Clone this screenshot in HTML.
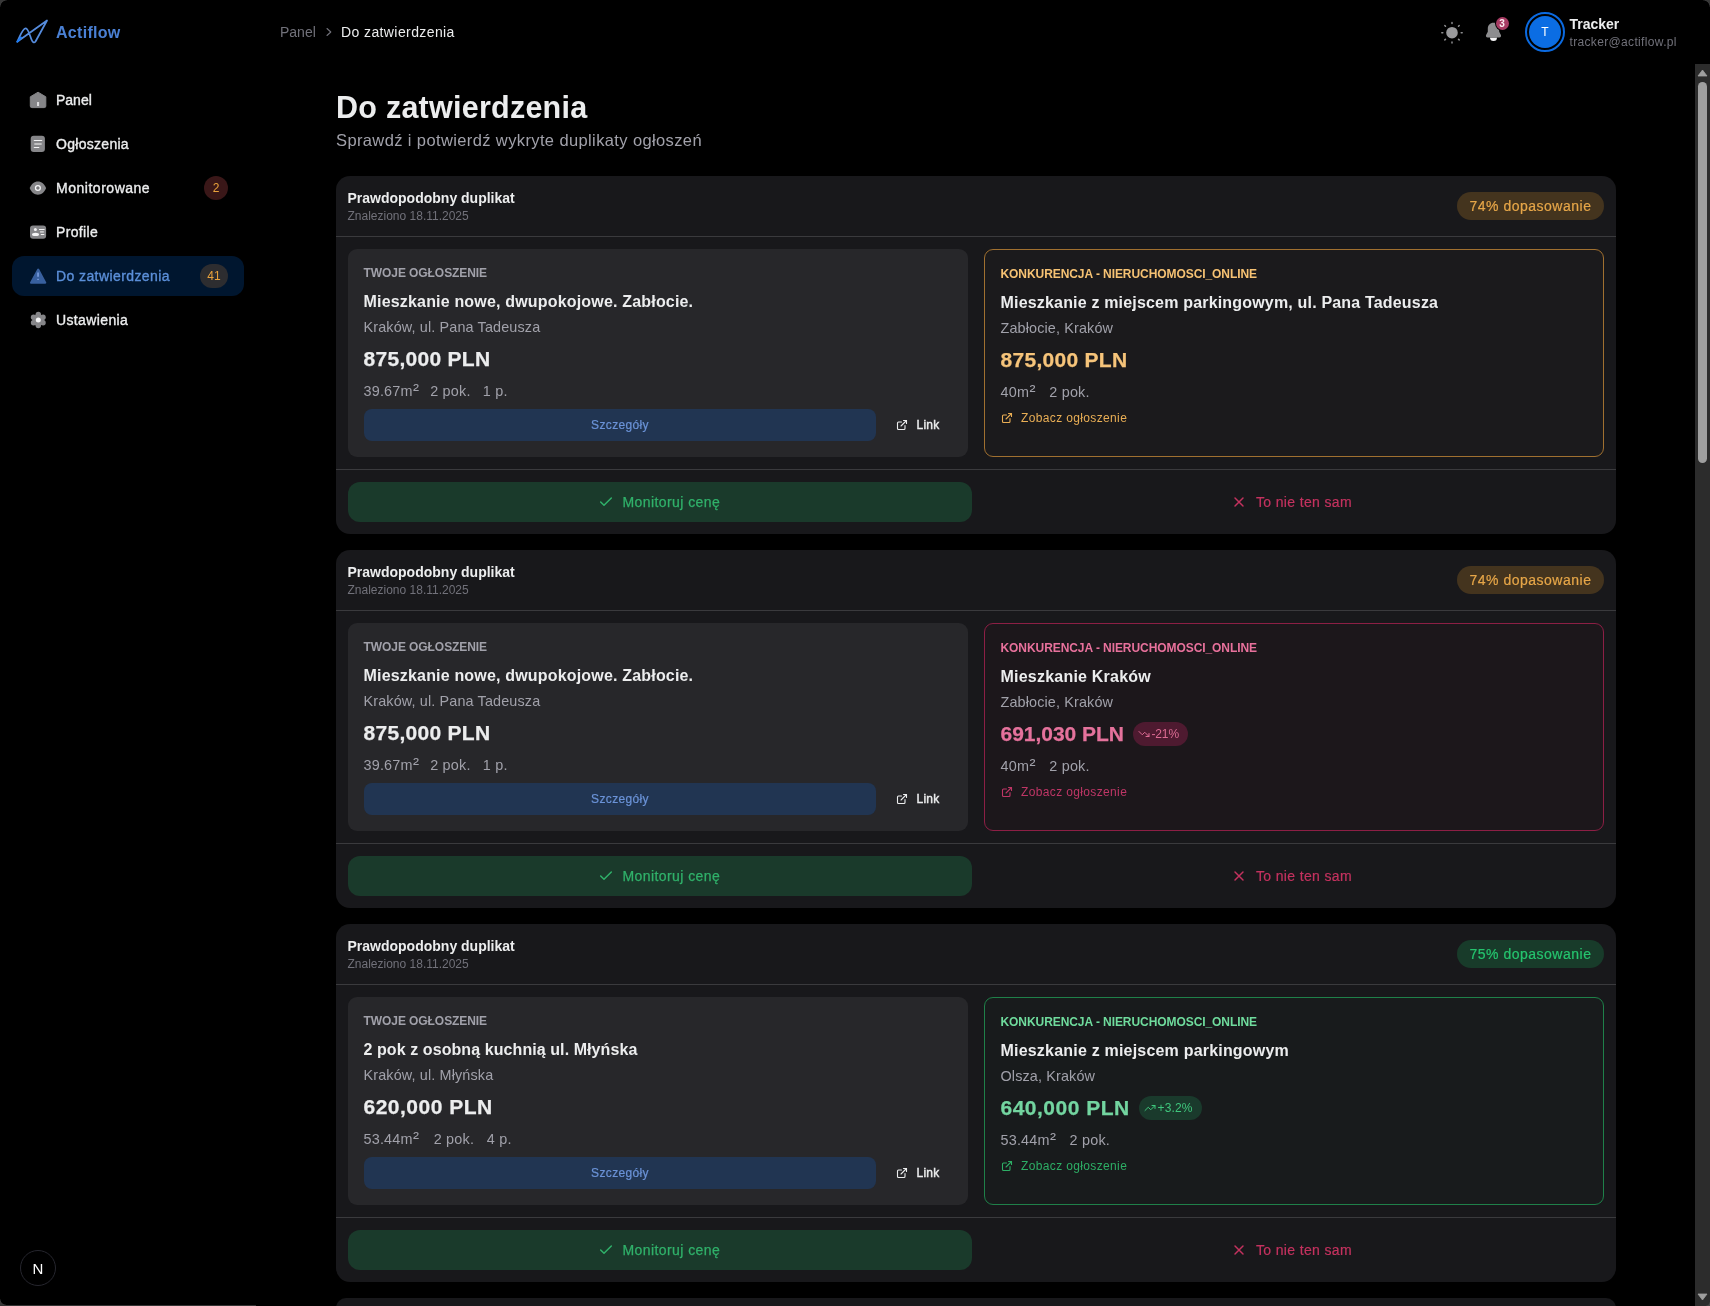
<!DOCTYPE html>
<html lang="pl">
<head>
<meta charset="utf-8">
<title>Do zatwierdzenia – Actiflow</title>
<style>
*{box-sizing:border-box;margin:0;padding:0}
html,body{width:1710px;height:1306px;overflow:hidden;background:#000;}
body{will-change:transform;position:relative;font-family:"Liberation Sans",Arial,sans-serif;color:#ecedee;-webkit-font-smoothing:antialiased}
.abs{position:absolute}
svg{display:block}
/* sidebar */
.logo-txt{left:56px;top:21px;height:24px;line-height:24px;font-size:16px;font-weight:700;color:#4a80d4;letter-spacing:.3px}
.nav{left:12px;width:232px;height:40px;border-radius:12px}
.nav .ic{position:absolute;left:17px;top:11px;width:18px;height:18px}
.nav .tx{position:absolute;left:44px;top:10px;height:20px;line-height:20px;font-size:14px;font-weight:400;-webkit-text-stroke:.35px currentColor;color:#ecedee;white-space:nowrap}
.nav.active{background:#00162f}
.nav.active .tx{color:#5b8fd9}
.badge{position:absolute;height:24px;line-height:24px;text-align:center;font-size:12px;border-radius:12px}
/* header */
.bc{top:22px;height:20px;line-height:20px;font-size:14px;white-space:nowrap}
#bc2{letter-spacing:.4px}#eml{letter-spacing:.34px}
/* main */
h1{position:absolute;left:336px;top:89px;height:36px;line-height:36px;font-size:30.500px;font-weight:700;color:#ecedee;white-space:nowrap;letter-spacing:.25px}
.sub{left:336px;top:128px;height:24px;line-height:24px;font-size:16.500px;color:#a1a1aa;white-space:nowrap;letter-spacing:.38px}
.card{position:absolute;left:336px;width:1280px;height:358px;background:#18181b;border-radius:14px;overflow:hidden}
.card .hd{position:absolute;left:0;top:0;width:100%;height:61px;border-bottom:1px solid #3a3a3d}
.card .hd .t1{position:absolute;left:11.500px;top:12px;height:20px;line-height:20px;font-size:14px;font-weight:700;white-space:nowrap}
.card .hd .t2{position:absolute;left:11.500px;top:32px;height:16px;line-height:16px;font-size:12px;color:#71717a;white-space:nowrap}
.chip{position:absolute;right:12px;top:16px;height:28px;line-height:28px;width:147px;border-radius:14px;font-size:14px;text-align:center;white-space:nowrap;letter-spacing:.5px;-webkit-text-stroke:.2px currentColor}
.chip.w{background:#44341e;color:#e6a648}
.chip.s{background:#183b2a;color:#25c46e}
.pl{position:absolute;left:12px;top:73px;width:620px;height:208px;background:#27272a;border-radius:9px;padding:16px}
.pr{position:absolute;left:648px;top:73px;width:620px;height:208px;border-radius:9px;padding:16px;border:1px solid}
.lbl,.ttl,.loc,.prc,.spc{margin-left:-.5px}
.lbl{height:16px;line-height:16px;font-size:12px;font-weight:700;white-space:nowrap;margin-bottom:8px;letter-spacing:-.07px}
.ttl{position:relative;top:1px;height:24px;line-height:24px;font-size:16px;font-weight:700;color:#ecedee;white-space:nowrap;margin-bottom:4px;letter-spacing:.18px}
.loc{height:20px;line-height:20px;font-size:14.400px;color:#a1a1aa;white-space:nowrap;margin-bottom:8px;letter-spacing:.14px}
.prc{height:28px;line-height:28px;font-size:21px;-webkit-text-stroke:.25px currentColor;font-weight:700;white-space:nowrap;margin-bottom:8px;position:relative;letter-spacing:.55px}
.spc{height:20px;line-height:20px;font-size:14.400px;color:#a1a1aa;white-space:nowrap;margin-bottom:8px;letter-spacing:.2px}
.spc{position:relative}.sq{font-style:normal;font-size:1.250em;line-height:0;position:relative;top:-.1px;margin-left:.3px;letter-spacing:0}.spc span{position:absolute;top:0}
.btn1{position:absolute;left:16px;top:160px;width:512px;height:32px;line-height:32px;border-radius:8px;background:#213552;color:#6b93d8;-webkit-text-stroke:.2px currentColor;font-size:12px;text-align:center;letter-spacing:.34px}
.lnk{position:absolute;left:548px;top:160px;height:32px;line-height:32px;font-size:12px;font-weight:400;-webkit-text-stroke:.4px currentColor;letter-spacing:.2px;color:#ecedee;white-space:nowrap}
.lnk svg{position:absolute;left:0;top:10px}
.lnk span{margin-left:20.600px}
.see{position:relative;height:16px;line-height:16px;font-size:12px;white-space:nowrap;padding-left:20px;letter-spacing:.36px}
.see svg{position:absolute;left:0;top:2px}
.ft{position:absolute;left:0;top:293px;width:100%;height:65px;border-top:1px solid #3a3a3d}
.ok{position:absolute;left:12px;top:12px;width:624px;height:40px;line-height:40px;border-radius:12px;background:#1a3a2b;color:#30b16a;-webkit-text-stroke:.25px currentColor;font-size:14px;white-space:nowrap;letter-spacing:.43px}
.no{position:absolute;left:644px;top:12px;width:624px;height:40px;line-height:40px;color:#c4325f;-webkit-text-stroke:.2px currentColor;font-size:14px;white-space:nowrap;letter-spacing:.35px}
.tr{position:absolute;top:2px;height:24px;line-height:24px;border-radius:12px;font-size:12px;font-weight:400;white-space:nowrap}
</style>
</head>
<body>
<!-- SIDEBAR -->
<svg class="abs" style="left:14px;top:16px" width="36" height="32" viewBox="0 0 36 32" fill="none" stroke="#558bdc" stroke-width="1.750" stroke-linejoin="round" stroke-linecap="round"><path d="M3.200 25.800C5.500 21.500 8.500 12.200 11.800 12.400C14.200 12.600 16 20 17.500 23.500C18.500 26 20 27.500 21.500 25.500L33 4.500Z"/><path d="M3.400 25.600 7 21.500" stroke="#1a7bf5" stroke-width="1.900"/></svg>
<div class="abs logo-txt">Actiflow</div>

<!--NAV-->
<div class="abs nav" style="top:80px"><svg class="ic" viewBox="0 0 18 18"><path d="M9.050 1.200 16.800 5.800V15.100a1.500 1.500 0 0 1-1.500 1.500H2.800a1.500 1.500 0 0 1-1.500-1.500V5.800Z" fill="#868689" stroke="#868689" stroke-width="1" stroke-linejoin="round"/><rect x="8" y="11" width="2.100" height="4.100" rx=".3" fill="#dcdcde"/></svg><span class="tx" style="letter-spacing:0px">Panel</span></div>
<div class="abs nav" style="top:124px"><svg class="ic" viewBox="0 0 18 18"><rect x="1.700" y=".8" width="14.200" height="16.300" rx="3" fill="#868689"/><path d="M5.300 5.500h7.400M5.300 12.500h4.500" stroke="#f4f4f5" stroke-width="1.200" stroke-linecap="round"/><path d="M5.300 9h7.400" stroke="#d4d4d6" stroke-width="1.500" stroke-linecap="butt"/></svg><span class="tx" style="letter-spacing:0.29px">Ogłoszenia</span></div>
<div class="abs nav" style="top:168px"><svg class="ic" viewBox="0 0 18 18"><path d="M.7 9.100C2.200 5 5.400 2.400 8.900 2.400S15.600 5 17.100 9.100C15.600 13.200 12.400 15.800 8.900 15.800S2.200 13.200.7 9.100Z" fill="#868689"/><circle cx="8.900" cy="9.050" r="2.400" fill="#7a7a7d" stroke="#f7f7f8" stroke-width="1.300"/></svg><span class="tx" style="letter-spacing:0.52px">Monitorowane</span><span class="badge" style="left:192px;top:8px;width:24px;background:#3a1718;color:#e9a23b">2</span></div>
<div class="abs nav" style="top:212px"><svg class="ic" viewBox="0 0 18 18"><rect x="1" y="2.600" width="16.100" height="13.100" rx="3" fill="#868689"/><circle cx="6.400" cy="6.400" r="1.500" fill="#f4f4f5"/><ellipse cx="6.500" cy="11.400" rx="3.500" ry="1.600" fill="#f4f4f5"/><path d="M10.400 6.500h4.800M12.200 11.500h2.700" stroke="#f4f4f5" stroke-width="1" stroke-linecap="round"/><path d="M11.100 8.900h3.700" stroke="#d0d0d2" stroke-width="1.600"/></svg><span class="tx" style="letter-spacing:0.34px">Profile</span></div>
<div class="abs nav active" style="top:256px"><svg class="ic" viewBox="0 0 18 18"><path d="M9.200 2.600 16.300 15.700H2Z" fill="#38609f" stroke="#38609f" stroke-width="2" stroke-linejoin="round"/><path d="M9.050 5.500v4.200" stroke="#7096d8" stroke-width="1.900" stroke-linecap="butt"/><rect x="8.100" y="11.700" width="1.900" height="1.300" rx=".5" fill="#7096d8"/></svg><span class="tx" style="letter-spacing:0.41px">Do zatwierdzenia</span><span class="badge" style="left:188px;top:8px;width:28px;background:#2d2d30;color:#e9a23b">41</span></div>
<div class="abs nav" style="top:300px"><svg class="ic" viewBox="0 0 18 18"><g fill="#868689"><circle cx="9.300" cy="9" r="6"/><circle cx="9.30" cy="14.50" r="2.700"/><circle cx="14.06" cy="11.75" r="2.700"/><circle cx="14.06" cy="6.25" r="2.700"/><circle cx="9.30" cy="3.50" r="2.700"/><circle cx="4.54" cy="6.25" r="2.700"/><circle cx="4.54" cy="11.75" r="2.700"/></g><circle cx="9.300" cy="9" r="2.500" fill="#f4f4f5"/></svg><span class="tx" style="letter-spacing:0.37px">Ustawienia</span></div>
<!--/NAV-->

<!-- next dev indicator -->
<div class="abs" style="left:20px;top:1250px;width:36px;height:36px;border-radius:18px;background:#000;border:1px solid #26262e"><div style="position:absolute;left:0;top:0;width:34px;height:34px;line-height:35px;text-align:center;font-size:15px;color:#fff">N</div></div>
<div class="abs" style="left:0;top:1305px;width:256px;height:1px;background:#333"></div>

<div class="abs" style="left:0;top:0;width:7px;height:7px;background:radial-gradient(circle at 100% 100%,rgba(56,56,56,0) 6.300px,#383838 7px)"></div>
<div class="abs" style="left:1703px;top:0;width:7px;height:7px;background:radial-gradient(circle at 0 100%,rgba(56,56,56,0) 6.300px,#383838 7px)"></div>
<div class="abs" style="left:0;top:1299px;width:6px;height:6px;background:radial-gradient(circle at 100% 0,rgba(56,56,56,0) 5.300px,#383838 6px)"></div>
<div class="abs" style="left:1706px;top:1302px;width:4px;height:4px;background:radial-gradient(circle at 0 0,rgba(72,72,72,0) 3.300px,#484848 4px);z-index:5"></div>
<!-- HEADER -->
<div class="abs bc" style="left:280px;color:#71717a" id="bc1">Panel</div>
<svg class="abs" style="left:323px;top:26px" width="12" height="12" viewBox="0 0 12 12" fill="none" stroke="#71717a" stroke-width="1.100" stroke-linecap="round" stroke-linejoin="round"><path d="M4 2.500 7.800 6 4 9.500"/></svg>
<div class="abs bc" style="left:341px;color:#ecedee" id="bc2">Do zatwierdzenia</div>

<svg class="abs" style="left:1440px;top:21px" width="24" height="24" viewBox="0 0 24 24" fill="none"><circle cx="12" cy="11.700" r="5.800" fill="#9a9a9c"/><g stroke="#8d8d8f" stroke-width="1.500" stroke-linecap="round"><path d="M12 1.500v1M12 20.900v1M1.800 11.700h1M21.200 11.700h1M4.800 4.500l.7.700M18.500 18.200l.7.700M19.200 4.500l-.7.700M5.500 18.200l-.7.700"/></g></svg>
<svg class="abs" style="left:1482px;top:20px" width="24" height="24" viewBox="0 0 24 24" fill="none"><path d="M8 17.500h7a3.500 3.500 0 0 1-7 0Z" fill="#f4f4f5"/><path d="M11.500 2.800c3.400 0 5.700 2.500 5.700 5.800v3.200l1.700 3.200c.5 1-.2 2.500-1.500 2.500H5.600c-1.300 0-2-1.500-1.500-2.500l1.700-3.200V8.600c0-3.300 2.300-5.800 5.700-5.800Z" fill="#8d8d8f"/></svg>
<div class="abs" style="left:1495.500px;top:16.500px;width:13px;height:13px;border-radius:7px;background:#a83c64;box-shadow:0 0 0 1px #000;color:#fdeef2;font-size:10px;font-weight:700;line-height:13px;text-align:center">3</div>
<div class="abs" style="left:1525px;top:12px;width:40px;height:40px;border-radius:20px;border:2px solid #0b6ae0"></div>
<div class="abs" style="left:1529px;top:16px;width:32px;height:32px;border-radius:16px;background:#0b6de3;color:#fff;font-size:12px;line-height:32px;text-align:center">T</div>
<div class="abs" style="left:1569.500px;top:14px;height:20px;line-height:20px;font-size:14px;font-weight:700;color:#ecedee;white-space:nowrap" id="usr">Tracker</div>
<div class="abs" style="left:1569.500px;top:34px;height:16px;line-height:16px;font-size:12px;color:#71717a;white-space:nowrap" id="eml">tracker@actiflow.pl</div>

<!-- scrollbar -->
<div class="abs" style="left:1695px;top:64px;width:15px;height:1242px;background:#2c2c2c"></div>
<div class="abs" style="left:1698px;top:82px;width:9px;height:381px;border-radius:4.500px;background:#9f9f9f"></div>
<svg class="abs" style="left:1697px;top:69px" width="11" height="8" viewBox="0 0 11 8"><path d="M5.500 1 10 7H1Z" fill="#9f9f9f" stroke="#9f9f9f" stroke-width=".8" stroke-linejoin="round"/></svg>
<svg class="abs" style="left:1697px;top:1293px" width="11" height="8" viewBox="0 0 11 8"><path d="M5.500 7 10 1H1Z" fill="#9f9f9f" stroke="#9f9f9f" stroke-width=".8" stroke-linejoin="round"/></svg>

<!-- MAIN -->
<h1 id="h1">Do zatwierdzenia</h1>
<div class="abs sub" id="sub">Sprawdź i potwierdź wykryte duplikaty ogłoszeń</div>

<!--CARDS-->
<div class="card" style="top:176px">
<div class="hd"><div class="t1">Prawdopodobny duplikat</div><div class="t2">Znaleziono 18.11.2025</div><div class="chip w">74% dopasowanie</div></div>
<div class="pl"><div class="lbl" style="color:#a1a1aa">TWOJE OGŁOSZENIE</div><div class="ttl" style="letter-spacing:0.18px">Mieszkanie nowe, dwupokojowe. Zabłocie.</div><div class="loc">Kraków, ul. Pana Tadeusza</div><div class="prc" style="color:#ecedee;letter-spacing:0.29px">875,000 PLN</div><div class="spc"><span style="left:0px">39.67m<i class="sq">²</i></span><span style="left:66.7px">2 pok.</span><span style="left:119.3px">1 p.</span></div><div class="btn1">Szczegóły</div><div class="lnk"><svg width="12" height="12" viewBox="0 0 24 24" fill="none" stroke="currentColor" stroke-width="2.200" stroke-linecap="round" stroke-linejoin="round"><path d="M15 3h6v6"/><path d="M10 14 21 3"/><path d="M18 13v6a2 2 0 0 1-2 2H5a2 2 0 0 1-2-2V8a2 2 0 0 1 2-2h6"/></svg><span>Link</span></div></div>
<div class="pr" style="border-color:#a07030;background:#1b1a1c"><div class="lbl" style="color:#f6c273">KONKURENCJA - NIERUCHOMOSCI_ONLINE</div><div class="ttl" style="letter-spacing:0.18px">Mieszkanie z miejscem parkingowym, ul. Pana Tadeusza</div><div class="loc">Zabłocie, Kraków</div><div class="prc" style="color:#f6c47a"><span class="pv" style="letter-spacing:0.29px">875,000 PLN</span></div><div class="spc"><span style="left:0px">40m<i class="sq">²</i></span><span style="left:48.8px">2 pok.</span></div><div class="see" style="color:#e9ae55"><svg width="12" height="12" viewBox="0 0 24 24" fill="none" stroke="currentColor" stroke-width="2.200" stroke-linecap="round" stroke-linejoin="round"><path d="M15 3h6v6"/><path d="M10 14 21 3"/><path d="M18 13v6a2 2 0 0 1-2 2H5a2 2 0 0 1-2-2V8a2 2 0 0 1 2-2h6"/></svg>Zobacz ogłoszenie</div></div>
<div class="ft"><div class="ok"><svg style="position:absolute;left:250px;top:12px" width="16" height="16" viewBox="0 0 24 24" fill="none" stroke="currentColor" stroke-width="2.200" stroke-linecap="round" stroke-linejoin="round"><path d="M20 6 9 17l-5-5"/></svg><span style="position:absolute;left:274.400px">Monitoruj cenę</span></div><div class="no"><svg style="position:absolute;left:251px;top:12px" width="16" height="16" viewBox="0 0 24 24" fill="none" stroke="currentColor" stroke-width="2.200" stroke-linecap="round" stroke-linejoin="round"><path d="M18 6 6 18M6 6l12 12"/></svg><span style="position:absolute;left:276px">To nie ten sam</span></div></div>
</div>
<div class="card" style="top:550px">
<div class="hd"><div class="t1">Prawdopodobny duplikat</div><div class="t2">Znaleziono 18.11.2025</div><div class="chip w">74% dopasowanie</div></div>
<div class="pl"><div class="lbl" style="color:#a1a1aa">TWOJE OGŁOSZENIE</div><div class="ttl" style="letter-spacing:0.18px">Mieszkanie nowe, dwupokojowe. Zabłocie.</div><div class="loc">Kraków, ul. Pana Tadeusza</div><div class="prc" style="color:#ecedee;letter-spacing:0.29px">875,000 PLN</div><div class="spc"><span style="left:0px">39.67m<i class="sq">²</i></span><span style="left:66.7px">2 pok.</span><span style="left:119.3px">1 p.</span></div><div class="btn1">Szczegóły</div><div class="lnk"><svg width="12" height="12" viewBox="0 0 24 24" fill="none" stroke="currentColor" stroke-width="2.200" stroke-linecap="round" stroke-linejoin="round"><path d="M15 3h6v6"/><path d="M10 14 21 3"/><path d="M18 13v6a2 2 0 0 1-2 2H5a2 2 0 0 1-2-2V8a2 2 0 0 1 2-2h6"/></svg><span>Link</span></div></div>
<div class="pr" style="border-color:#8c1f45;background:#1c171b"><div class="lbl" style="color:#e8719c">KONKURENCJA - NIERUCHOMOSCI_ONLINE</div><div class="ttl" style="letter-spacing:0.22px">Mieszkanie Kraków</div><div class="loc">Zabłocie, Kraków</div><div class="prc" style="color:#e5729c"><span class="pv" style="letter-spacing:-0.03px">691,030 PLN</span><span class="tr" style="-webkit-text-stroke:0;left:132px;width:55px;background:#4e1a30;color:#dc6b93;letter-spacing:-.15px"><svg style="position:absolute;left:5px;top:6px" width="12" height="12" viewBox="0 0 24 24" fill="none" stroke="currentColor" stroke-width="2" stroke-linecap="round" stroke-linejoin="round"><path d="M22 17 13.500 8.500l-5 5L2 7"/><path d="M16 17h6v-6"/></svg><span style="position:absolute;left:19px">-21%</span></span></div><div class="spc"><span style="left:0px">40m<i class="sq">²</i></span><span style="left:48.8px">2 pok.</span></div><div class="see" style="color:#bf3666"><svg width="12" height="12" viewBox="0 0 24 24" fill="none" stroke="currentColor" stroke-width="2.200" stroke-linecap="round" stroke-linejoin="round"><path d="M15 3h6v6"/><path d="M10 14 21 3"/><path d="M18 13v6a2 2 0 0 1-2 2H5a2 2 0 0 1-2-2V8a2 2 0 0 1 2-2h6"/></svg>Zobacz ogłoszenie</div></div>
<div class="ft"><div class="ok"><svg style="position:absolute;left:250px;top:12px" width="16" height="16" viewBox="0 0 24 24" fill="none" stroke="currentColor" stroke-width="2.200" stroke-linecap="round" stroke-linejoin="round"><path d="M20 6 9 17l-5-5"/></svg><span style="position:absolute;left:274.400px">Monitoruj cenę</span></div><div class="no"><svg style="position:absolute;left:251px;top:12px" width="16" height="16" viewBox="0 0 24 24" fill="none" stroke="currentColor" stroke-width="2.200" stroke-linecap="round" stroke-linejoin="round"><path d="M18 6 6 18M6 6l12 12"/></svg><span style="position:absolute;left:276px">To nie ten sam</span></div></div>
</div>
<div class="card" style="top:924px">
<div class="hd"><div class="t1">Prawdopodobny duplikat</div><div class="t2">Znaleziono 18.11.2025</div><div class="chip s">75% dopasowanie</div></div>
<div class="pl"><div class="lbl" style="color:#a1a1aa">TWOJE OGŁOSZENIE</div><div class="ttl" style="letter-spacing:0.08px">2 pok z osobną kuchnią ul. Młyńska</div><div class="loc">Kraków, ul. Młyńska</div><div class="prc" style="color:#ecedee;letter-spacing:0.49px">620,000 PLN</div><div class="spc"><span style="left:0px">53.44m<i class="sq">²</i></span><span style="left:70.2px">2 pok.</span><span style="left:123.3px">4 p.</span></div><div class="btn1">Szczegóły</div><div class="lnk"><svg width="12" height="12" viewBox="0 0 24 24" fill="none" stroke="currentColor" stroke-width="2.200" stroke-linecap="round" stroke-linejoin="round"><path d="M15 3h6v6"/><path d="M10 14 21 3"/><path d="M18 13v6a2 2 0 0 1-2 2H5a2 2 0 0 1-2-2V8a2 2 0 0 1 2-2h6"/></svg><span>Link</span></div></div>
<div class="pr" style="border-color:#1f8049;background:#181b1c"><div class="lbl" style="color:#6fdc9d">KONKURENCJA - NIERUCHOMOSCI_ONLINE</div><div class="ttl" style="letter-spacing:0.2px">Mieszkanie z miejscem parkingowym</div><div class="loc">Olsza, Kraków</div><div class="prc" style="color:#73d5a0"><span class="pv" style="letter-spacing:0.49px">640,000 PLN</span><span class="tr" style="-webkit-text-stroke:0;left:138px;width:63px;background:#1a3a2c;color:#3fc77d;letter-spacing:.15px"><svg style="position:absolute;left:5px;top:6px" width="12" height="12" viewBox="0 0 24 24" fill="none" stroke="currentColor" stroke-width="2" stroke-linecap="round" stroke-linejoin="round"><path d="M22 7 13.500 15.500l-5-5L2 17"/><path d="M16 7h6v6"/></svg><span style="position:absolute;left:19px">+3.2%</span></span></div><div class="spc"><span style="left:0px">53.44m<i class="sq">²</i></span><span style="left:69.1px">2 pok.</span></div><div class="see" style="color:#2dae65"><svg width="12" height="12" viewBox="0 0 24 24" fill="none" stroke="currentColor" stroke-width="2.200" stroke-linecap="round" stroke-linejoin="round"><path d="M15 3h6v6"/><path d="M10 14 21 3"/><path d="M18 13v6a2 2 0 0 1-2 2H5a2 2 0 0 1-2-2V8a2 2 0 0 1 2-2h6"/></svg>Zobacz ogłoszenie</div></div>
<div class="ft"><div class="ok"><svg style="position:absolute;left:250px;top:12px" width="16" height="16" viewBox="0 0 24 24" fill="none" stroke="currentColor" stroke-width="2.200" stroke-linecap="round" stroke-linejoin="round"><path d="M20 6 9 17l-5-5"/></svg><span style="position:absolute;left:274.400px">Monitoruj cenę</span></div><div class="no"><svg style="position:absolute;left:251px;top:12px" width="16" height="16" viewBox="0 0 24 24" fill="none" stroke="currentColor" stroke-width="2.200" stroke-linecap="round" stroke-linejoin="round"><path d="M18 6 6 18M6 6l12 12"/></svg><span style="position:absolute;left:276px">To nie ten sam</span></div></div>
</div>
<div class="card" style="top:1298px;height:20px"></div>
<!--/CARDS-->
</body>
</html>
